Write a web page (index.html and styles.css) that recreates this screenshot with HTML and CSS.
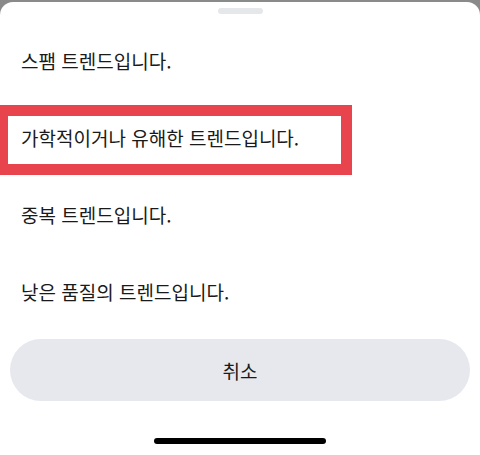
FILE: index.html
```html
<!DOCTYPE html>
<html lang="ko">
<head>
  <meta charset="UTF-8">
  <meta name="viewport" content="width=device-width, initial-scale=1.0">
  <title>신고 사유</title>
  <link rel="stylesheet" href="styles.css">
</head>
<body>

  <div class="sheet">
    <div class="handle"></div>

    <!-- Report reasons -->
    <ul class="reason-list">
      <li class="reason">스팸 트렌드입니다.</li>
      <li class="reason selected">
        가학적이거나 유해한 트렌드입니다.
        <span class="highlight"></span>
      </li>
      <li class="reason">중복 트렌드입니다.</li>
      <li class="reason">낮은 품질의 트렌드입니다.</li>
    </ul>

    <button class="cancel-btn">취소</button>

    <div class="home-indicator"></div>
  </div>

</body>
</html>
```

FILE: styles.css
```css
/* General Reset */
* {
  margin: 0;
  padding: 0;
  box-sizing: border-box;
}

body {
  font-family: 'Noto Sans CJK KR', 'Noto Sans', sans-serif;
  background-color: #8a8a8a;
  color: #1a1a1a;
  width: 480px;
  height: 455px;
  overflow: hidden;
}

.sheet {
  margin-top: 2px;
  height: 453px;
  background-color: #ffffff;
  border-radius: 13px 13px 0 0;
  padding-top: 6px;
}

.handle {
  width: 45px;
  height: 6px;
  margin: 0 auto;
  background-color: #e5e7eb;
  border-radius: 3px;
}

.reason-list {
  list-style: none;
  margin-top: 8px;
}

.reason {
  position: relative;
  height: 77px;
  display: flex;
  align-items: center;
  padding-left: 21px;
  font-size: 19px;
}

/* Red annotation box over the selected reason */
.highlight {
  position: absolute;
  left: 0;
  top: 6px;
  width: 352px;
  height: 70px;
  border-style: solid;
  border-color: #e8444e;
  border-width: 11px 11px 11px 8px;
}

.cancel-btn {
  display: block;
  width: 460px;
  height: 62px;
  margin: 9px auto 0;
  background-color: #e6e8ed;
  border: none;
  border-radius: 31px;
  font-family: inherit;
  font-size: 19px;
  color: #1a1a1a;
  cursor: pointer;
}

.home-indicator {
  width: 172px;
  height: 6px;
  margin: 37px auto 0;
  background-color: #000000;
  border-radius: 3px;
}
```
